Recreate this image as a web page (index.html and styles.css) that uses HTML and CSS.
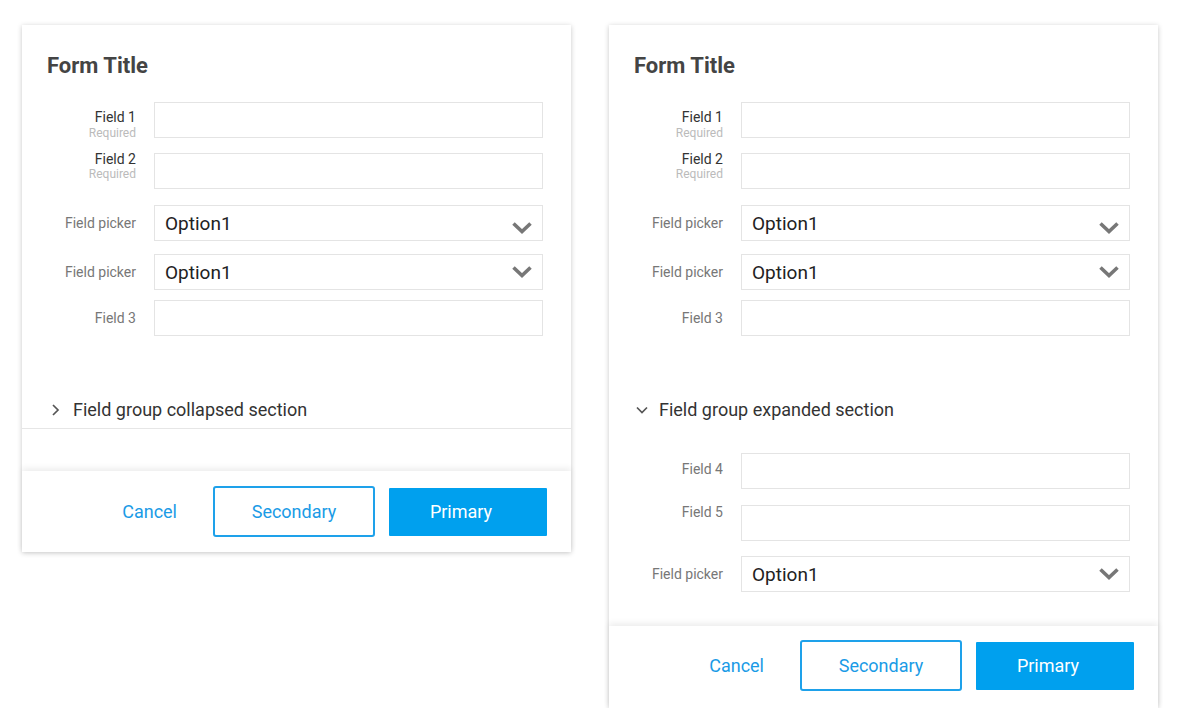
FILE: index.html
```html
<!DOCTYPE html>
<html>
<head>
<meta charset="utf-8">
<link rel="stylesheet" href="styles.css">
</head>
<body>
<div class="page">
  <div class="card card-a">
    <div class="body">
      <h1 class="title">Form Title</h1>
      <div class="row r1">
        <div class="label lab-req lab-low"><span class="lname">Field 1</span><span class="req">Required</span></div>
        <div class="input"></div>
      </div>
      <div class="row r2">
        <div class="label lab-req lab-high"><span class="lname">Field 2</span><span class="req">Required</span></div>
        <div class="input"></div>
      </div>
      <div class="row r3">
        <div class="label lab-c">Field picker</div>
        <div class="input picker"><span class="opt">Option1</span><svg class="chev chev-low" width="22" height="14" viewBox="0 0 22 14"><polyline points="2.5,2.5 11,10.5 19.5,2.5" fill="none" stroke="#777" stroke-width="3.6"/></svg></div>
      </div>
      <div class="row r4">
        <div class="label lab-c">Field picker</div>
        <div class="input picker"><span class="opt">Option1</span><svg class="chev" width="22" height="14" viewBox="0 0 22 14"><polyline points="2.5,2.5 11,10.5 19.5,2.5" fill="none" stroke="#777" stroke-width="3.6"/></svg></div>
      </div>
      <div class="row r5">
        <div class="label lab-c">Field 3</div>
        <div class="input"></div>
      </div>
      <div class="section">
        <svg class="sec-icon" width="12" height="14" viewBox="0 0 12 14"><polyline points="3,2 8,7 3,12" fill="none" stroke="#555" stroke-width="1.7"/></svg>
        <span class="sec-text">Field group collapsed section</span>
      </div>
    </div>
    <div class="divider"></div>
    <div class="spacer-a"></div>
    <div class="footer">
      <button class="btn btn-text">Cancel</button>
      <button class="btn btn-outline">Secondary</button>
      <button class="btn btn-primary">Primary</button>
    </div>
  </div>

  <div class="card card-b">
    <div class="body">
      <h1 class="title">Form Title</h1>
      <div class="row r1">
        <div class="label lab-req lab-low"><span class="lname">Field 1</span><span class="req">Required</span></div>
        <div class="input"></div>
      </div>
      <div class="row r2">
        <div class="label lab-req lab-high"><span class="lname">Field 2</span><span class="req">Required</span></div>
        <div class="input"></div>
      </div>
      <div class="row r3">
        <div class="label lab-c">Field picker</div>
        <div class="input picker"><span class="opt">Option1</span><svg class="chev chev-low" width="22" height="14" viewBox="0 0 22 14"><polyline points="2.5,2.5 11,10.5 19.5,2.5" fill="none" stroke="#777" stroke-width="3.6"/></svg></div>
      </div>
      <div class="row r4">
        <div class="label lab-c">Field picker</div>
        <div class="input picker"><span class="opt">Option1</span><svg class="chev" width="22" height="14" viewBox="0 0 22 14"><polyline points="2.5,2.5 11,10.5 19.5,2.5" fill="none" stroke="#777" stroke-width="3.6"/></svg></div>
      </div>
      <div class="row r5">
        <div class="label lab-c">Field 3</div>
        <div class="input"></div>
      </div>
      <div class="section">
        <svg class="sec-icon" width="14" height="12" viewBox="0 0 14 12"><polyline points="2,3.5 7,8.5 12,3.5" fill="none" stroke="#555" stroke-width="1.7"/></svg>
        <span class="sec-text">Field group expanded section</span>
      </div>
      <div class="row r6">
        <div class="label lab-c lab-c4">Field 4</div>
        <div class="input"></div>
      </div>
      <div class="row r7">
        <div class="label lab-top">Field 5</div>
        <div class="input"></div>
      </div>
      <div class="row r8">
        <div class="label lab-c">Field picker</div>
        <div class="input picker"><span class="opt">Option1</span><svg class="chev" width="22" height="14" viewBox="0 0 22 14"><polyline points="2.5,2.5 11,10.5 19.5,2.5" fill="none" stroke="#777" stroke-width="3.6"/></svg></div>
      </div>
    </div>
    <div class="spacer-b"></div>
    <div class="footer">
      <button class="btn btn-text">Cancel</button>
      <button class="btn btn-outline">Secondary</button>
      <button class="btn btn-primary">Primary</button>
    </div>
  </div>
</div>
</body>
</html>
```

FILE: styles.css
```css
* { box-sizing: border-box; }
html, body { margin: 0; padding: 0; background: #fff; }
body { font-family: Roboto, "Liberation Sans", Arial, sans-serif; color: #333; }

.page {
  display: flex;
  align-items: flex-start;
  gap: 38px;
  padding: 25px 0 0 22px;
}

.card {
  width: 549px;
  background: #fff;
  box-shadow: 0 1px 5px rgba(0, 0, 0, 0.22);
  display: flex;
  flex-direction: column;
}

.body {
  padding: 28px 28px 0 24px;
}

.title {
  margin: 0;
  font-size: 22px;
  line-height: 26px;
  font-weight: 700;
  color: #444;
  padding-left: 1px;
}

.row {
  display: flex;
  align-items: flex-start;
  gap: 18px;
}
.r1 { margin-top: 23px; }
.r2 { margin-top: 15px; }
.r3 { margin-top: 16px; }
.r4 { margin-top: 13px; }
.r5 { margin-top: 10px; }
.r6 { margin-top: 31px; }
.r7 { margin-top: 16px; }
.r8 { margin-top: 15px; }

.label {
  width: 90px;
  flex: none;
  text-align: right;
  font-size: 14px;
  color: #777;
  line-height: 16px;
}
.lab-c { padding-top: 10px; }
.lab-c4 { padding-top: 8px; }
.lab-top { padding-top: 0; margin-top: -1px; }
.lab-req {
  display: flex;
  flex-direction: column;
  align-items: flex-end;
  height: 30px;
}
.lab-low { padding-top: 7px; }
.lab-high { margin-top: -2px; }
.lab-low .req { margin-top: 1px; }
.lname { font-size: 14px; color: #333; line-height: 16px; }
.req { font-size: 12px; color: #bbb; line-height: 14px; }

.input {
  flex: 1;
  height: 36px;
  border: 1px solid #e4e4e4;
  background: #fff;
}

.picker {
  display: flex;
  align-items: center;
  justify-content: space-between;
  padding: 0 9px 0 10px;
}
.opt {
  font-size: 19px;
  color: #222;
  line-height: 22px;
  margin-top: 1px;
}
.chev { flex: none; }
.chev-low { margin-top: 10px; }

.section {
  display: flex;
  align-items: center;
  height: 24px;
  margin-top: 62px;
  padding-left: 4px;
}
.sec-icon { flex: none; }
.card-a .sec-icon { margin-right: 11px; }
.card-b .sec-icon { margin-right: 10px; margin-left: -2px; }
.sec-text {
  font-size: 18px;
  color: #333;
  line-height: 24px;
}

.divider {
  margin-top: 6px;
  height: 1px;
  background: #e6e6e6;
}
.spacer-a { height: 42px; }
.spacer-b { height: 34px; }

.footer {
  height: 81px;
  display: flex;
  align-items: center;
  justify-content: flex-end;
  padding-right: 24px;
  box-shadow: 0 -3px 6px rgba(0, 0, 0, 0.07);
  background: #fff;
}
.card-b .footer { height: 82px; padding-bottom: 3px; }

.btn {
  font-family: Roboto, "Liberation Sans", Arial, sans-serif;
  font-size: 18px;
  background: none;
  border: none;
  cursor: pointer;
  padding: 0;
}
.btn-text {
  color: #1a9be6;
  margin-right: 36px;
}
.btn-outline {
  width: 162px;
  height: 51px;
  border: 2px solid #1ea1ea;
  border-radius: 3px;
  color: #1a9be6;
  margin-right: 14px;
}
.btn-primary {
  width: 158px;
  height: 48px;
  background: #00a0ee;
  color: #fff;
  border-radius: 1px;
  padding-right: 14px;
}
```
